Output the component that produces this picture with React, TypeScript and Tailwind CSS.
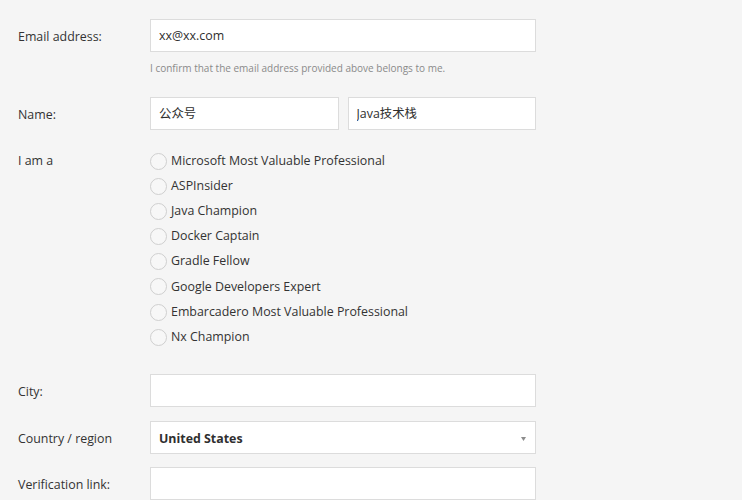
import React from "react";

const OPTIONS = [
  "Microsoft Most Valuable Professional",
  "ASPInsider",
  "Java Champion",
  "Docker Captain",
  "Gradle Fellow",
  "Google Developers Expert",
  "Embarcadero Most Valuable Professional",
  "Nx Champion",
];

const inputCls =
  "h-[33px] w-full border border-[#dcdcdc] bg-white px-2 pb-[1px] text-[12.4px] text-[#2f2f2f] outline-none";

export default function App() {
  return (
    <div
      className="min-h-[500px] bg-[#f5f5f5] pl-[18px] pt-[19px] text-[12.4px] text-[#333]"
      style={{ fontFamily: '"Open Sans", "Noto Sans CJK SC", sans-serif' }}
    >
      {/* Email */}
      <Row label="Email address:">
        <input className={inputCls} defaultValue="xx@xx.com" />
        <p className="mt-[9px] text-[10px] leading-[14px] text-[#8a8a8a]">
          I confirm that the email address provided above belongs to me.
        </p>
      </Row>

      {/* Name */}
      <Row label="Name:" className="mt-[22px]">
        <div className="flex gap-[9px]">
          <input className={inputCls} defaultValue="公众号" />
          <input className={inputCls} defaultValue="Java技术栈" />
        </div>
      </Row>

      {/* Title */}
      <div className="mt-[21px] flex">
        <div className="w-[132px] shrink-0 leading-[20px]">I am a</div>
        <ul className="flex flex-col gap-[5.2px]">
          {OPTIONS.map((o) => (
            <li key={o} className="flex h-[20px] items-center">
              <span className="mr-[4px] h-[17px] w-[17px] shrink-0 rounded-full border border-[#cfcfcf] bg-[#f7f7f7]" />
              {o}
            </li>
          ))}
        </ul>
      </div>

      <Row label="City:" className="mt-[27px]">
        <input className={inputCls} />
      </Row>

      <Row label="Country / region" className="mt-[14px]">
        <div className={`${inputCls} flex items-center justify-between pt-[3px] font-bold`}>
          <span>United States</span>
          <svg width="5" height="4" viewBox="0 0 5 4" className="mr-[1px]">
            <path d="M0 0H5L2.5 4Z" fill="#8c8c8c" />
          </svg>
        </div>
      </Row>

      <Row label="Verification link:" className="mt-[13px]">
        <input className={inputCls} />
      </Row>
    </div>
  );
}

const Row: React.FC<{
  label: string;
  className?: string;
  children: React.ReactNode;
}> = ({ label, className = "", children }) => (
  <div className={`flex ${className}`}>
    <label className="w-[132px] shrink-0 pt-[7.6px] leading-[20px]">{label}</label>
    <div className="w-[386px]">{children}</div>
  </div>
);
